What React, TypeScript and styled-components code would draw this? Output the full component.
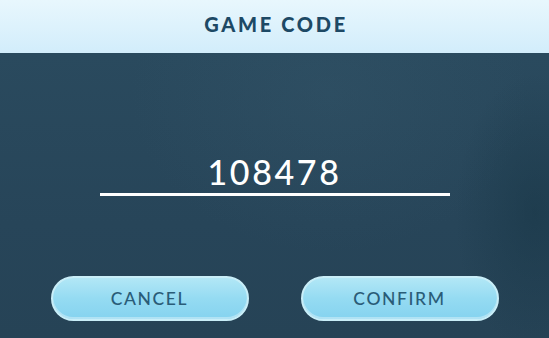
import styled, { createGlobalStyle } from "styled-components";

const Global = createGlobalStyle`
    html, body { margin: 0; padding: 0; }
    body {
        width: 549px;
        height: 338px;
        overflow: hidden;
        font-family: "Lato", "Open Sans", sans-serif;
    }
`

const App = () => {
    return (
        <>
            <Global />
            <Screen>
                <Header>
                    <Title>GAME CODE</Title>
                </Header>
                <Body>
                    <CodeField>
                        <Code>108478</Code>
                    </CodeField>
                    <Actions>
                        <PillButton>CANCEL</PillButton>
                        <PillButton>CONFIRM</PillButton>
                    </Actions>
                </Body>
            </Screen>
        </>
    )
}

const Screen = styled.div`
    display: flex;
    flex-direction: column;
    width: 549px;
    height: 338px;
`

const Header = styled.header`
    display: flex;
    align-items: center;
    justify-content: center;
    height: 53px;
    flex-shrink: 0;
    background: linear-gradient(180deg, #e8f7fd 0%, #d2edfb 100%);
`

const Title = styled.h1`
    margin: 0;
    padding-bottom: 6px;
    padding-left: 3px;
    font-family: "Lato", sans-serif;
    font-weight: 900;
    font-size: 20px;
    letter-spacing: 2.7px;
    color: #1d4965;
`

const Body = styled.main`
    flex: 1;
    display: flex;
    flex-direction: column;
    align-items: center;
    background:
        radial-gradient(ellipse 80px 140px at 535px 160px, rgba(20, 50, 65, 0.45), transparent),
        radial-gradient(ellipse 200px 160px at 330px 40px, rgba(60, 95, 115, 0.22), transparent),
        linear-gradient(180deg, #2a4a5e 0%, #274559 60%, #264356 100%);
`

const CodeField = styled.div`
    display: flex;
    justify-content: center;
    width: 350px;
    margin-top: 99px;
    border-bottom: 3px solid #ffffff;
`

const Code = styled.span`
    font-family: "Lato", sans-serif;
    font-weight: 500;
    font-size: 34px;
    line-height: 40px;
    letter-spacing: 2.6px;
    color: #ffffff;
    padding-bottom: 1px;
`

const Actions = styled.div`
    display: flex;
    gap: 52px;
    margin-top: 80px;
`

const PillButton = styled.button`
    width: 198px;
    height: 45px;
    border-radius: 23px;
    border: 2px solid #c9eef8;
    background: linear-gradient(180deg, #b2e7f6 0%, #95dbf2 50%, #85d3ef 100%);
    box-shadow: inset 0 -2px 0 rgba(255, 255, 255, 0.35);
    font-family: "Lato", sans-serif;
    font-size: 17.5px;
    font-weight: 500;
    letter-spacing: 1.6px;
    color: #2a5c78;
    cursor: pointer;
`

export default App;
